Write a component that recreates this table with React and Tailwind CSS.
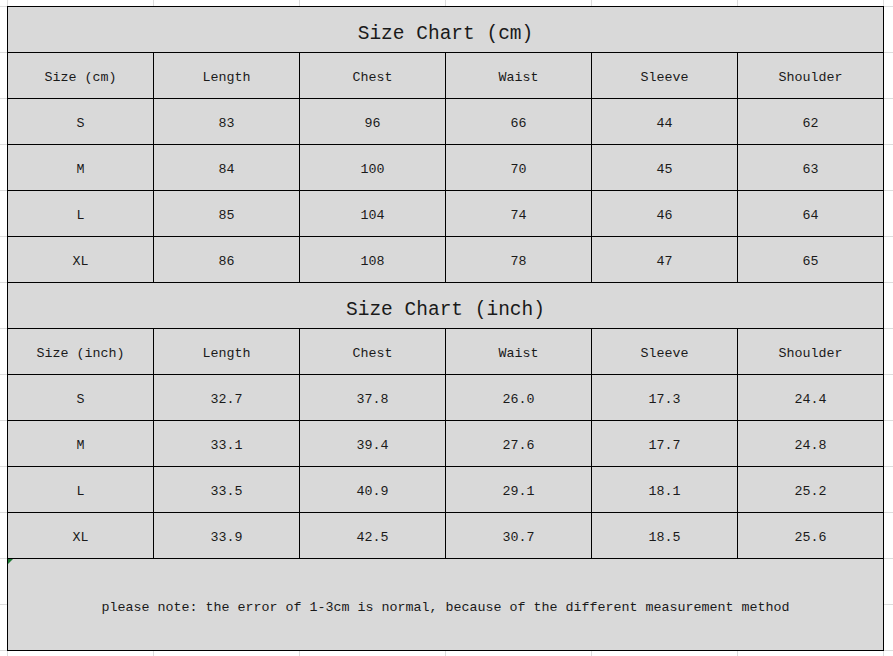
import React from 'react';

const cols = ['Length', 'Chest', 'Waist', 'Sleeve', 'Shoulder'];

const cmRows = [
  ['S', '83', '96', '66', '44', '62'],
  ['M', '84', '100', '70', '45', '63'],
  ['L', '85', '104', '74', '46', '64'],
  ['XL', '86', '108', '78', '47', '65'],
];

const inchRows = [
  ['S', '32.7', '37.8', '26.0', '17.3', '24.4'],
  ['M', '33.1', '39.4', '27.6', '17.7', '24.8'],
  ['L', '33.5', '40.9', '29.1', '18.1', '25.2'],
  ['XL', '33.9', '42.5', '30.7', '18.5', '25.6'],
];

function Cell({ children }) {
  return (
    <div className="bg-[#d9d9d9] flex items-center justify-center pt-[5px] text-[13.33px] text-[#1a1a1a]">
      {children}
    </div>
  );
}

function Section({ unit, rows }) {
  return (
    <>
      {/* Title row */}
      <div className="col-span-6 bg-[#d9d9d9] flex items-center justify-center pt-[10px] text-[19.5px] text-[#1a1a1a]">
        Size Chart ({unit})
      </div>
      <Cell>Size ({unit})</Cell>
      {cols.map((c) => (
        <Cell key={c}>{c}</Cell>
      ))}
      {rows.map((r) =>
        r.map((v, i) => <Cell key={r[0] + i}>{v}</Cell>)
      )}
    </>
  );
}

export default function App() {
  return (
    <div className="w-[893px] h-[656px] bg-white overflow-hidden bg-[linear-gradient(to_right,#dcdcdc_1px,transparent_1px),linear-gradient(to_bottom,#dcdcdc_1px,transparent_1px)] bg-[size:146px_46px] bg-[position:7px_6px] pt-[6px] pl-[7px] font-['Liberation_Mono',monospace]">
      <div className="w-[877px] grid grid-cols-[repeat(6,145px)] auto-rows-[45px] gap-px p-px bg-black">
        <Section unit="cm" rows={cmRows} />
        <Section unit="inch" rows={inchRows} />
        {/* Note row */}
        <div className="relative col-span-6 row-span-2 bg-[#d9d9d9] flex items-center justify-center pt-[6px] text-[13.33px] text-[#1a1a1a]">
          <div className="absolute left-0 top-0 w-0 h-0 border-t-[5px] border-t-[#1e7b34] border-r-[5px] border-r-transparent" />
          please note: the error of 1-3cm is normal, because of the different measurement method
        </div>
      </div>
    </div>
  );
}
